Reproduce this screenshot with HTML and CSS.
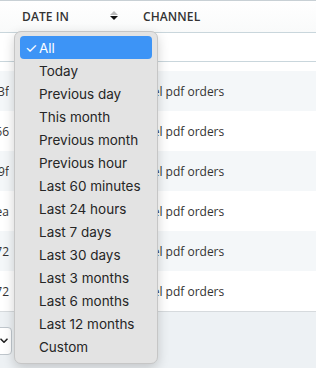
FILE: index.html
```html
<!DOCTYPE html>
<html lang="en">

<head>
  <meta charset="UTF-8" />
  <title>Orders</title>
  <link rel="stylesheet" href="styles.css">
</head>

<body>
  <div class="grid">
    <table class="orders">
      <thead>
        <tr class="head-row">
          <th class="col-id"></th>
          <th class="col-date">
            <span class="head-label">Date in</span>
            <span class="sort">
              <span class="sort-up"></span>
              <span class="sort-down"></span>
            </span>
          </th>
          <th class="col-channel">Channel</th>
        </tr>
        <tr class="filter-row">
          <td></td>
          <td></td>
          <td></td>
        </tr>
      </thead>
      <tbody>
        <tr class="spacer"><td colspan="3"></td></tr>
        <tr class="odd">
          <td class="col-id"><div class="id-clip"><span>a83f</span></div></td>
          <td></td>
          <td class="col-channel"><span class="channel-text">Excel pdf orders</span></td>
        </tr>
        <tr>
          <td class="col-id"><div class="id-clip"><span>c066</span></div></td>
          <td></td>
          <td class="col-channel"><span class="channel-text">Excel pdf orders</span></td>
        </tr>
        <tr class="odd">
          <td class="col-id"><div class="id-clip"><span>e19f</span></div></td>
          <td></td>
          <td class="col-channel"><span class="channel-text">Excel pdf orders</span></td>
        </tr>
        <tr>
          <td class="col-id"><div class="id-clip"><span>b0ea</span></div></td>
          <td></td>
          <td class="col-channel"><span class="channel-text">Excel pdf orders</span></td>
        </tr>
        <tr class="odd">
          <td class="col-id"><div class="id-clip"><span>d472</span></div></td>
          <td></td>
          <td class="col-channel"><span class="channel-text">Excel pdf orders</span></td>
        </tr>
        <tr>
          <td class="col-id"><div class="id-clip"><span>f872</span></div></td>
          <td></td>
          <td class="col-channel"><span class="channel-text">Excel pdf orders</span></td>
        </tr>
      </tbody>
    </table>

    <div class="footer">
      <div class="page-size">
        <span>25</span>
        <svg class="chevron" width="8" height="6" viewBox="0 0 8 6">
          <path d="M1 1.2 L4 4.2 L7 1.2" fill="none" stroke="#222" stroke-width="1.6" stroke-linecap="round" stroke-linejoin="round" />
        </svg>
      </div>
    </div>
  </div>

  <!-- native select popup, open -->
  <ul class="date-menu">
    <li class="selected"><span class="check">✓</span>All</li>
    <li><span class="check"></span>Today</li>
    <li><span class="check"></span>Previous day</li>
    <li><span class="check"></span>This month</li>
    <li><span class="check"></span>Previous month</li>
    <li><span class="check"></span>Previous hour</li>
    <li><span class="check"></span>Last 60 minutes</li>
    <li><span class="check"></span>Last 24 hours</li>
    <li><span class="check"></span>Last 7 days</li>
    <li><span class="check"></span>Last 30 days</li>
    <li><span class="check"></span>Last 3 months</li>
    <li><span class="check"></span>Last 6 months</li>
    <li><span class="check"></span>Last 12 months</li>
    <li><span class="check"></span>Custom</li>
  </ul>
</body>

</html>
```

FILE: styles.css
```css
:root {
  --text-color: #333333;
  --line-color: #c9d6dc;
  --stripe-bg: #f4f7f9;
  --footer-bg: #edf1f4;
  --menu-bg: #e3e3e3;
  --menu-blue: #3d94f6;
}

* {
  margin: 0;
  padding: 0;
  box-sizing: border-box;
}

html,
body {
  height: 100%;
  overflow: hidden;
}

body {
  font-family: 'Open Sans', 'Noto Sans', sans-serif;
  color: var(--text-color);
  background-color: #ffffff;
  position: relative;
}

.grid {
  border-top: 1px solid #c8d0d5;
  height: 100%;
  display: flex;
  flex-direction: column;
}

.orders {
  width: 100%;
  border-collapse: collapse;
  table-layout: fixed;
}

.col-id {
  width: 14px;
}

.col-date {
  width: 121px;
}

.head-row th {
  height: 31px;
  padding: 0 8px;
  text-align: left;
  font-size: 12px;
  font-weight: 600;
  text-transform: uppercase;
  letter-spacing: 0.1px;
  background: linear-gradient(#ffffff, #f9fafa);
  border-bottom: 1px solid var(--line-color);
  white-space: nowrap;
}

.head-row th.col-id {
  padding: 0;
}

.head-label {
  display: inline-block;
  vertical-align: middle;
}

.sort {
  display: inline-flex;
  flex-direction: column;
  gap: 1px;
  vertical-align: middle;
  margin-left: 38px;
  margin-top: -2px;
}

.sort-up,
.sort-down {
  width: 0;
  height: 0;
  border-left: 4px solid transparent;
  border-right: 4px solid transparent;
}

.sort-up {
  border-bottom: 4px solid #b9b9b9;
}

.sort-down {
  border-top: 4px solid #111111;
}

.filter-row td {
  height: 29px;
  border-bottom: 1px solid var(--line-color);
}

tbody tr td {
  height: 40px;
  font-size: 12px;
  white-space: nowrap;
  overflow: hidden;
}

tbody tr.spacer td {
  height: 10px;
}

tbody tr.odd {
  background-color: var(--stripe-bg);
}

.id-clip {
  width: 9px;
  overflow: hidden;
  display: flex;
  justify-content: flex-end;
}

.col-channel {
  padding-left: 8px;
}

.channel-text {
  display: inline-block;
  margin-left: -9px;
}

.footer {
  flex: 1;
  background-color: var(--footer-bg);
  border-top: 1px solid #d6dadd;
  padding-top: 15px;
}

.page-size {
  width: 52px;
  height: 28px;
  margin-left: -40px;
  background-color: #ffffff;
  border: 1px solid #bfc6cc;
  border-radius: 4px;
  display: flex;
  align-items: center;
  justify-content: space-between;
  padding: 0 3px 0 8px;
  font-size: 12px;
}

.page-size span {
  color: transparent;
}

.date-menu {
  position: absolute;
  left: 14px;
  top: 31px;
  width: 144px;
  padding: 4px 5px 5px;
  list-style: none;
  background-color: var(--menu-bg);
  border: 1px solid #c6c6c6;
  border-radius: 7px;
  box-shadow: 0 4px 12px rgba(0, 0, 0, 0.18);
  font-family: 'Inter', 'Liberation Sans', sans-serif;
  font-size: 13.5px;
  color: #262626;
}

.date-menu li {
  height: 23px;
  display: flex;
  align-items: center;
  border-radius: 4px;
  white-space: nowrap;
}

.date-menu .check {
  width: 19px;
  padding-left: 5px;
  font-size: 14px;
}

.date-menu li.selected {
  background-color: var(--menu-blue);
  color: #ffffff;
}
```
